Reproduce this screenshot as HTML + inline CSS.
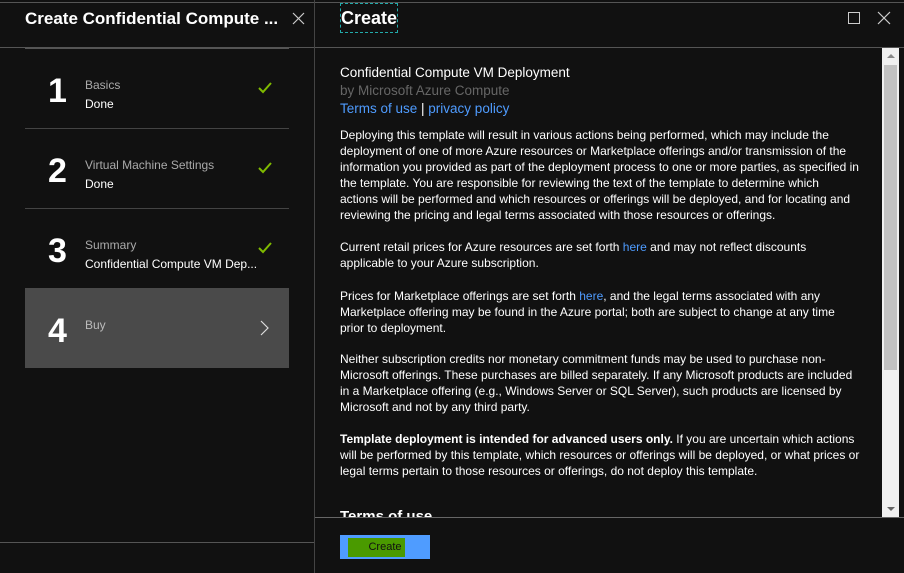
<!DOCTYPE html>
<html><head><style>
*{margin:0;padding:0;box-sizing:border-box}
body{width:904px;height:573px;background:#111;font-family:"Liberation Sans",sans-serif;color:#fff;position:relative;overflow:hidden}
.a{position:absolute}
.p{position:absolute;left:340px;width:520px;font-size:12px;line-height:16px;color:#fff}
a{color:#4f9cff;text-decoration:none}
.num{font-size:34px;font-weight:bold;color:#fff;position:absolute;left:48px}
.lbl{position:absolute;left:85px;font-size:12px;color:#aaa}
.sub{position:absolute;left:85px;font-size:12px;color:#fff}
.chk{position:absolute;left:258px}
</style></head><body>
<div class="a" style="left:0;top:2px;width:904px;height:1px;background:#555"></div>
<div class="a" style="left:0;top:47px;width:904px;height:1px;background:#555"></div>
<div class="a" style="left:314px;top:0;width:1px;height:573px;background:#444"></div>
<div class="a" style="left:25px;top:9px;font-size:17px;font-weight:bold">Create Confidential Compute ...</div>
<svg class="a" style="left:292px;top:12px" width="13" height="13"><path d="M1 1L12 12M12 1L1 12" stroke="#ccc" stroke-width="1.2"/></svg>
<div class="a" style="left:340px;top:3px;padding:2px 0;font-size:18px;font-weight:bold;border:1px dashed #2aa;height:30px;line-height:24px">Create</div>
<div class="a" style="left:848px;top:12px;width:12px;height:12px;border:1px solid #ccc"></div>
<svg class="a" style="left:877px;top:11px" width="14" height="14"><path d="M1 1L13 13M13 1L1 13" stroke="#ccc" stroke-width="1.2"/></svg>

<div class="a" style="left:25px;top:48px;width:264px;height:1px;background:#555"></div>
<div class="num" style="top:72px">1</div><div class="lbl" style="top:78px">Basics</div><div class="sub" style="top:97px">Done</div>
<svg class="chk" style="top:82px" width="14" height="12"><path d="M1 6L5 10L13 1" stroke="#7fba00" stroke-width="2" fill="none"/></svg>
<div class="a" style="left:25px;top:128px;width:264px;height:1px;background:#444"></div>
<div class="num" style="top:152px">2</div><div class="lbl" style="top:158px">Virtual Machine Settings</div><div class="sub" style="top:177px">Done</div>
<svg class="chk" style="top:162px" width="14" height="12"><path d="M1 6L5 10L13 1" stroke="#7fba00" stroke-width="2" fill="none"/></svg>
<div class="a" style="left:25px;top:208px;width:264px;height:1px;background:#444"></div>
<div class="num" style="top:232px">3</div><div class="lbl" style="top:238px">Summary</div><div class="sub" style="top:257px">Confidential Compute VM Dep...</div>
<svg class="chk" style="top:242px" width="14" height="12"><path d="M1 6L5 10L13 1" stroke="#7fba00" stroke-width="2" fill="none"/></svg>
<div class="a" style="left:25px;top:288px;width:264px;height:80px;background:#4a4a4a"></div>
<div class="num" style="top:312px">4</div><div class="lbl" style="top:318px;color:#bbb">Buy</div>
<svg class="a" style="left:260px;top:320px" width="10" height="16"><path d="M1 1L8 8L1 15" stroke="#ddd" fill="none" stroke-width="1.2"/></svg>
<div class="a" style="left:0;top:542px;width:314px;height:1px;background:#555"></div>

<div class="p" style="top:64px;font-size:13.5px;line-height:18px">Confidential Compute VM Deployment<br><span style="color:#666">by Microsoft Azure Compute</span><br><a>Terms of use</a> | <a>privacy policy</a></div>
<div class="p" style="top:127px">Deploying this template will result in various actions being performed, which may include the deployment of one of more Azure resources or Marketplace offerings and/or transmission of the information you provided as part of the deployment process to one or more parties, as specified in the template. You are responsible for reviewing the text of the template to determine which actions will be performed and which resources or offerings will be deployed, and for locating and reviewing the pricing and legal terms associated with those resources or offerings.</div>
<div class="p" style="top:239px">Current retail prices for Azure resources are set forth <a>here</a> and may not reflect discounts applicable to your Azure subscription.</div>
<div class="p" style="top:288px">Prices for Marketplace offerings are set forth <a>here</a>, and the legal terms associated with any Marketplace offering may be found in the Azure portal; both are subject to change at any time prior to deployment.</div>
<div class="p" style="top:351px">Neither subscription credits nor monetary commitment funds may be used to purchase non-Microsoft offerings. These purchases are billed separately. If any Microsoft products are included in a Marketplace offering (e.g., Windows Server or SQL Server), such products are licensed by Microsoft and not by any third party.</div>
<div class="p" style="top:431px"><b>Template deployment is intended for advanced users only.</b> If you are uncertain which actions will be performed by this template, which resources or offerings will be deployed, or what prices or legal terms pertain to those resources or offerings, do not deploy this template.</div>
<div class="a" style="left:340px;top:508px;height:9px;overflow:hidden;font-size:15px;font-weight:bold;line-height:18px">Terms of use</div>

<div class="a" style="left:882px;top:48px;width:17px;height:469px;background:#f0f0f0"></div>
<div class="a" style="left:884px;top:65px;width:13px;height:305px;background:#c2c2c2"></div>
<div class="a" style="left:887px;top:54px;border:4px solid transparent;border-bottom:4px solid #888;border-top:0"></div>
<div class="a" style="left:887px;top:507px;border:4px solid transparent;border-top:4px solid #666;border-bottom:0"></div>
<div class="a" style="left:315px;top:517px;width:589px;height:1px;background:#666"></div>

<div class="a" style="left:340px;top:535px;width:90px;height:24px;background:#4f9cff"></div>
<div class="a" style="left:348px;top:538px;width:57px;height:19px;background:#4a9a00"></div>
<div class="a" style="left:340px;top:541px;width:90px;text-align:center;font-size:11px;color:#111">Create</div>
</body></html>
